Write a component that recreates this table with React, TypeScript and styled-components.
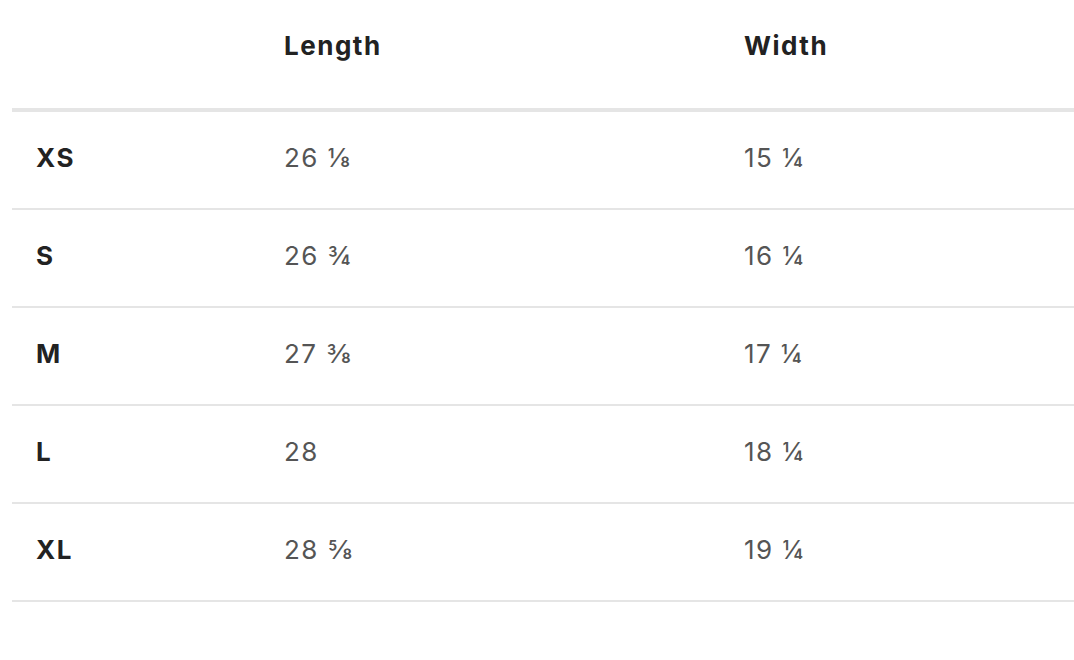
import React from "react";
import styled, { createGlobalStyle } from "styled-components";

const Global = createGlobalStyle`
  html, body { margin: 0; padding: 0; background: #fff; }
  body { font-family: "Inter", "Lato", "Liberation Sans", sans-serif; }
`;

const Table = styled.div`
  margin-left: 12px;
  width: 1062px;
  display: grid;
  grid-template-columns: 248px 460px 354px;
`;

const HeadRow = styled.div`
  display: contents;
`;

const HeadCell = styled.div`
  height: 112px;
  box-sizing: border-box;
  padding: 28px 24px 0;
  line-height: 36px;
  font-size: 26px;
  letter-spacing: 1.5px;
  font-weight: 700;
  color: #222;
  border-bottom: 4px solid #e5e5e5;
`;

const Row = styled.div`
  display: contents;
`;

const Cell = styled.div<{ $label?: boolean }>`
  height: 98px;
  box-sizing: border-box;
  padding: 28px 24px 0;
  line-height: 36px;
  font-size: 26px;
  letter-spacing: 1.5px;
  font-weight: ${(p) => (p.$label ? 700 : 400)};
  color: ${(p) => (p.$label ? "#222" : "#555")};
  border-bottom: 2px solid #e5e5e5;
`;

const rows = [
  ["XS", "26 ⅛", "15 ¼"],
  ["S", "26 ¾", "16 ¼"],
  ["M", "27 ⅜", "17 ¼"],
  ["L", "28", "18 ¼"],
  ["XL", "28 ⅝", "19 ¼"],
];

export default function App() {
  return (
    <>
      <Global />
      <Table>
        <HeadRow>
          <HeadCell />
          <HeadCell>Length</HeadCell>
          <HeadCell>Width</HeadCell>
        </HeadRow>
        {rows.map((r) => (
          <Row key={r[0]}>
            <Cell $label>{r[0]}</Cell>
            <Cell>{r[1]}</Cell>
            <Cell>{r[2]}</Cell>
          </Row>
        ))}
      </Table>
    </>
  );
}
